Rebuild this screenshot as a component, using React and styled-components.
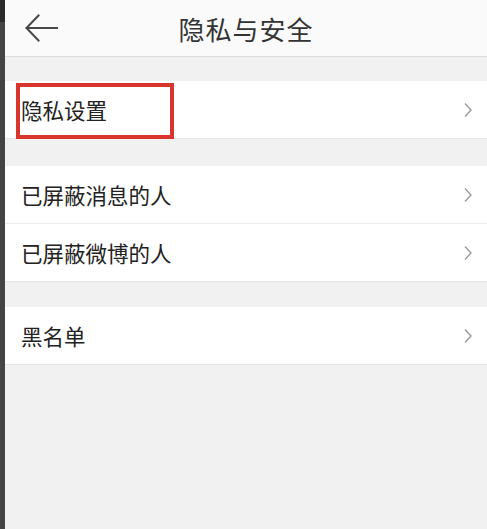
import React from "react";
import styled, { createGlobalStyle } from "styled-components";

const GlobalStyle = createGlobalStyle`
  html, body {
    margin: 0;
    padding: 0;
    background: #f1f1f1;
  }
  body {
    font-family: "Noto Sans CJK SC", "Noto Sans", sans-serif;
  }
`;

const Screen = styled.div`
  display: flex;
  width: 487px;
  height: 529px;
  overflow: hidden;
`;

const EdgeStrip = styled.div`
  width: 5px;
  flex-shrink: 0;
  background: linear-gradient(#2b2b2b 0, #2b2b2b 22px, #444 22px);
`;

const Page = styled.div`
  flex: 1;
  background: #f1f1f1;
`;

const Header = styled.div`
  position: relative;
  height: 56px;
  background: #fafafa;
  border-bottom: 1px solid #dcdcdc;
  display: flex;
  align-items: center;
  justify-content: center;
`;

const BackButton = styled.div`
  position: absolute;
  left: 20px;
  top: 14px;
  width: 34px;
  height: 28px;
`;

const Title = styled.h1`
  margin: 0;
  font-size: 26px;
  font-weight: 400;
  color: #333;
  letter-spacing: 1px;
`;

const Group = styled.div`
  margin-top: ${(p) => p.$gap}px;
  background: #fff;
  border-bottom: 1px solid #e4e4e4;
`;

const Row = styled.div`
  position: relative;
  height: 57px;
  display: flex;
  align-items: center;
  justify-content: space-between;
  padding: 0 14px 0 16px;
  border-top: ${(p) => (p.$first ? "none" : "1px solid #ececec")};
`;

const Label = styled.span`
  font-size: 21.5px;
  color: #222;
`;

const Highlight = styled.div`
  position: absolute;
  left: 11px;
  top: 2px;
  width: 150px;
  height: 48px;
  border: 4px solid #d8352d;
`;

function BackArrow() {
  return (
    <svg width="34" height="28" viewBox="0 0 34 28" fill="none">
      <path
        d="M13.5 1.5 L1.5 14 L13.5 26.5 M1.5 14 H32"
        stroke="#484848"
        strokeWidth="2"
        strokeLinecap="square"
      />
    </svg>
  );
}

function Chevron() {
  return (
    <svg width="10" height="16" viewBox="0 0 10 16" fill="none">
      <path d="M2 1.5 L8 8 L2 14.5" stroke="#9a9a9a" strokeWidth="1.4" />
    </svg>
  );
}

const groups = [
  { gap: 24, items: ["隐私设置"], highlight: 0 },
  { gap: 27, items: ["已屏蔽消息的人", "已屏蔽微博的人"] },
  { gap: 25, items: ["黑名单"] },
];

function App() {
  return (
    <>
      <GlobalStyle />
      <Screen>
        <EdgeStrip />
        <Page>
          <Header>
            <BackButton>
              <BackArrow />
            </BackButton>
            <Title>隐私与安全</Title>
          </Header>
          {groups.map((group, gi) => (
            <Group key={gi} $gap={group.gap}>
              {group.items.map((item, i) => (
                <Row key={item} $first={i === 0}>
                  {group.highlight === i && <Highlight />}
                  <Label>{item}</Label>
                  <Chevron />
                </Row>
              ))}
            </Group>
          ))}
        </Page>
      </Screen>
    </>
  );
}

export default App;
